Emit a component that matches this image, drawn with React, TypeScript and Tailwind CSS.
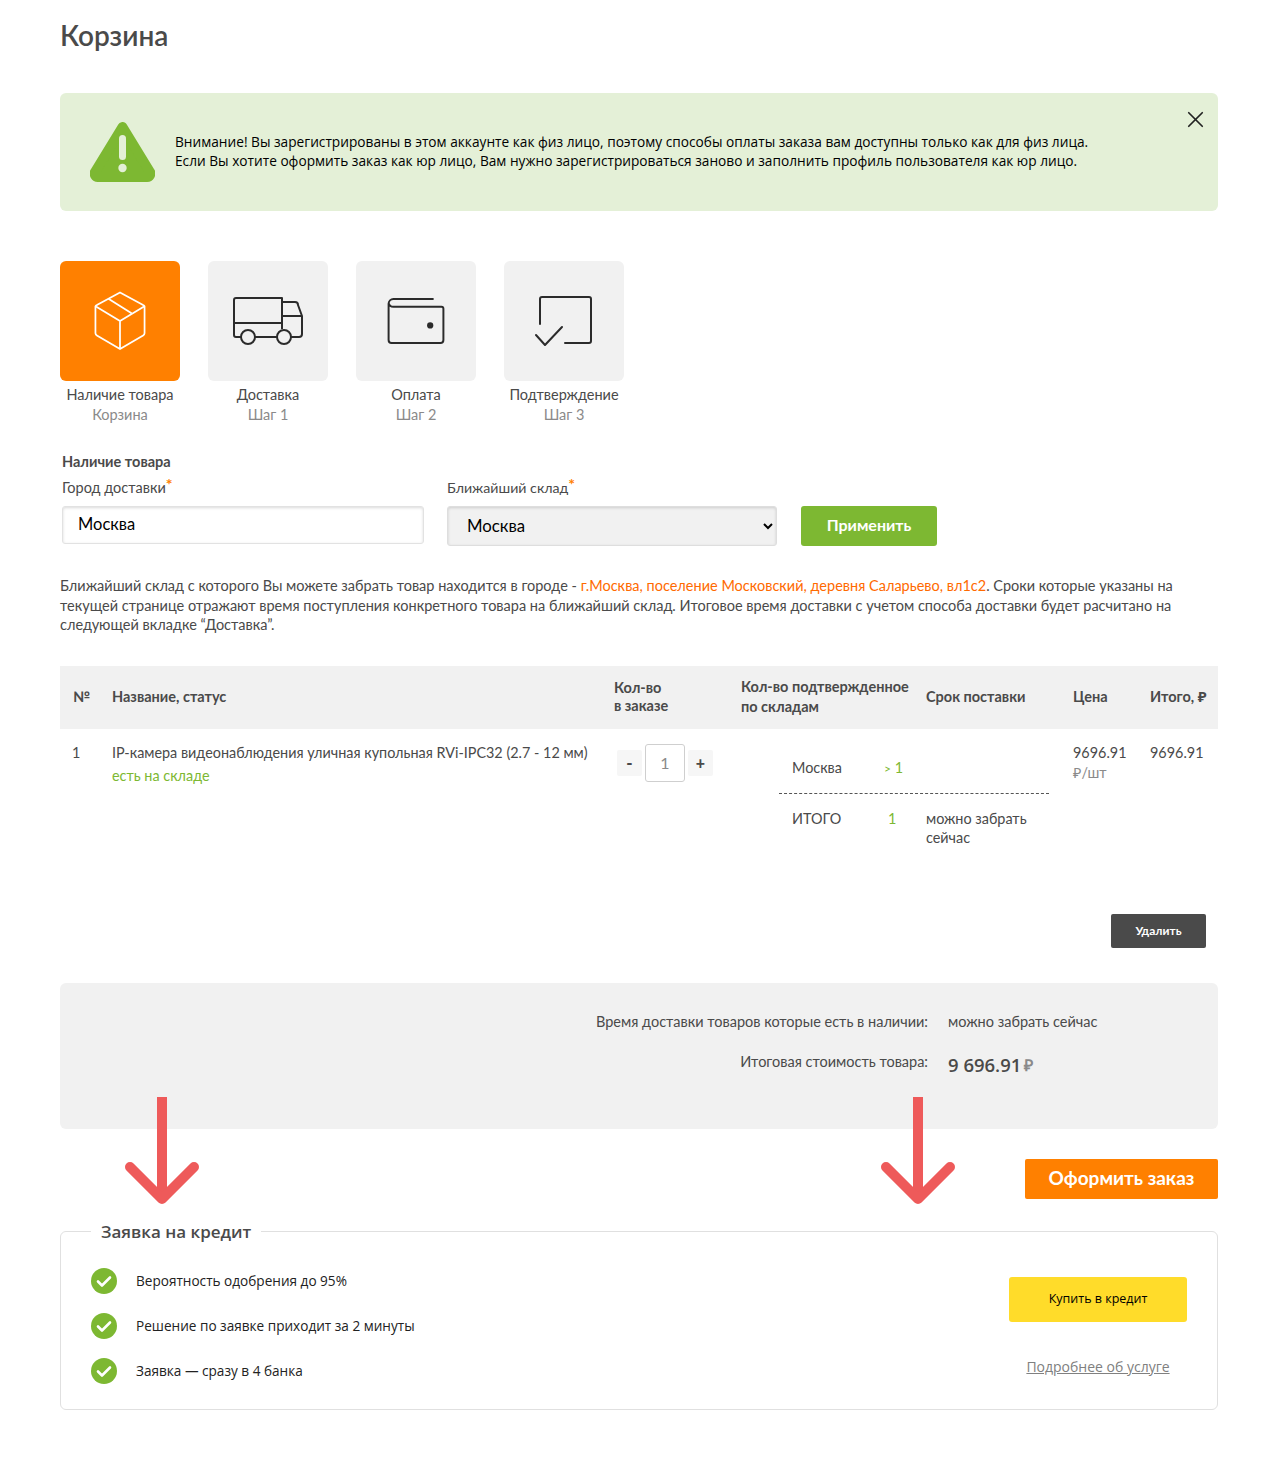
import { X } from 'lucide-react';

const lato = "font-['Lato','Noto_Sans',sans-serif]";

function Arrow({ className }: { className: string }) {
    return (
        <svg className={className} width="76" height="108" viewBox="0 0 76 108" fill="none">
            <path d="M38 0V100" stroke="#ee5a5a" strokeWidth="10" />
            <path d="M6 70L38 102L70 70" stroke="#ee5a5a" strokeWidth="10" strokeLinecap="round" strokeLinejoin="round" />
        </svg>
    );
}

function BoxIcon() {
    return (
        <svg width="52" height="60" viewBox="0 0 54 62" fill="none" stroke="#fff" strokeWidth="1.8" strokeLinejoin="round" preserveAspectRatio="none">
            <path d="M27 1.5L51 14.5A2 2 0 0 1 52.5 17V43.5A3 3 0 0 1 51 46L27 60L3 46A3 3 0 0 1 1.5 43.5V17A2 2 0 0 1 3 14.5Z" />
            <path d="M2 16L27 31L52 16M27 31V60M15 8L39 23" />
        </svg>
    );
}

function TruckIcon() {
    return (
        <svg width="70" height="48" viewBox="0 0 70 48" fill="none" stroke="#2b2b2b" strokeWidth="2" strokeLinejoin="round">
            <path d="M8 40H3A2 2 0 0 1 1 38V3A2 2 0 0 1 3 1H49V32M22 40H44" />
            <path d="M1 26H49" />
            <path d="M58 40H66A3 3 0 0 0 69 37V19L65 8A3 3 0 0 0 62 5H49M49 19H69" />
            <circle cx="15" cy="40" r="7" />
            <circle cx="51" cy="40" r="7" />
        </svg>
    );
}

function WalletIcon() {
    return (
        <svg width="58" height="46" viewBox="0 0 58 47" fill="none" stroke="#2b2b2b" strokeWidth="2" strokeLinejoin="round">
            <path d="M47 1H6A5 5 0 0 0 1 6V43A3 3 0 0 0 4 46H54A3 3 0 0 0 57 43V11A2 2 0 0 0 55 9H6A5 5 0 0 1 1 5" />
            <circle cx="43.5" cy="28" r="3.2" fill="#2b2b2b" stroke="none" />
        </svg>
    );
}

function ConfirmIcon() {
    return (
        <svg width="58" height="50" viewBox="0 0 58 50" fill="none" stroke="#2b2b2b" strokeWidth="2" strokeLinecap="round" strokeLinejoin="round">
            <path d="M5 28V3A2 2 0 0 1 7 1H54A2 2 0 0 1 56 3V45A2 2 0 0 1 54 47H30" />
            <path d="M1 39L10 49L27 31" />
        </svg>
    );
}

function CheckCircle() {
    return (
        <svg width="26" height="26" viewBox="0 0 26 26" className="shrink-0">
            <circle cx="13" cy="13" r="13" fill="#7db832" />
            <path d="M7 13.5L11 17.5L19 9.5" fill="none" stroke="#fff" strokeWidth="2.6" strokeLinecap="round" strokeLinejoin="round" />
        </svg>
    );
}

const steps = [
    { title: 'Наличие товара', sub: 'Корзина', icon: <BoxIcon />, active: true },
    { title: 'Доставка', sub: 'Шаг 1', icon: <TruckIcon />, active: false },
    { title: 'Оплата', sub: 'Шаг 2', icon: <WalletIcon />, active: false },
    { title: 'Подтверждение', sub: 'Шаг 3', icon: <ConfirmIcon />, active: false },
];

const credits = ['Вероятность одобрения до 95%', 'Решение по заявке приходит за 2 минуты', 'Заявка — сразу в 4 банка'];

export default function App() {
    return (
        <div className={`${lato} relative h-[1457px] bg-white pl-[60px] pr-[49px] text-[14px] text-[#4a4a4a]`}>
            <h1 className="pt-[18px] text-[28px] leading-[34px] font-semibold">Корзина</h1>

            {/* Alert */}
            <div className="relative mt-[41px] flex h-[118px] items-center rounded-md bg-[#e4f0d7] pl-[30px]">
                <svg width="65" height="60" viewBox="0 0 65 60">
                    <path d="M32.5 5L60 50A3.5 3.5 0 0 1 57 55H8A3.5 3.5 0 0 1 5 50Z" fill="#7db832" stroke="#7db832" strokeWidth="10" strokeLinejoin="round" />
                    <rect x="29" y="13" width="7" height="25" rx="3.5" fill="#e4f0d7" />
                    <circle cx="32.5" cy="46" r="4.2" fill="#e4f0d7" />
                </svg>
                <p className="ml-[20px] pb-[2px] font-['Open_Sans',sans-serif] text-[13.7px] leading-[19px] text-black">
                    Внимание! Вы зарегистрированы в этом аккаунте как физ лицо, поэтому способы оплаты заказа вам доступны только как для физ лица.
                    <br />
                    Если Вы хотите оформить заказ как юр лицо, Вам нужно зарегистрироваться заново и заполнить профиль пользователя как юр лицо.
                </p>
                <X className="absolute top-[13px] right-[9px] h-[27px] w-[27px] text-[#222]" strokeWidth={1.5} />
            </div>

            {/* Steps */}
            <div className="mt-[50px] flex gap-[28px]">
                {steps.map((s) => (
                    <div key={s.title} className="w-[120px] text-center">
                        <div className={`flex h-[120px] items-center justify-center rounded-md ${s.active ? 'bg-[#ff8000]' : 'bg-[#f1f1f1]'}`}>
                            {s.icon}
                        </div>
                        <div className="mt-[4px] whitespace-nowrap text-[14.5px] leading-[20px]">{s.title}</div>
                        <div className="text-[14.5px] leading-[20px] text-[#8a8a8a]">{s.sub}</div>
                    </div>
                ))}
            </div>

            {/* City form */}
            <div className="pt-[27px] pl-[2px]">
                <div className="text-[14.5px] leading-[20px] font-bold">Наличие товара</div>
                <div className="mt-[6px] flex items-start">
                    <div className="w-[362px]">
                        <div className="text-[14.5px] leading-[20px]">Город доставки<span className="relative -top-[3px] text-[16px] leading-[10px] font-bold text-[#ff8000]">*</span></div>
                        <input
                            readOnly
                            value="Москва"
                            className="mt-[8px] h-[38px] w-full rounded-[3px] border border-[#e2e2e2] bg-white pb-[3px] pl-[15px] text-[16.5px] text-black shadow-[inset_0_1px_3px_rgba(0,0,0,0.15)] outline-none"
                        />
                    </div>
                    <div className="ml-[23px] w-[330px]">
                        <div className="text-[14.2px] leading-[20px]">Ближайший склад<span className="relative -top-[3px] text-[16px] leading-[10px] font-bold text-[#ff8000]">*</span></div>
                        <select className="mt-[8px] h-[40px] w-full rounded-[3px] border border-[#dedede] bg-[#f1f1f1] pb-[1px] pl-[15px] text-[16.8px] text-black shadow-[inset_0_1px_3px_rgba(0,0,0,0.15)] outline-none">
                            <option>Москва</option>
                        </select>
                    </div>
                    <button className="mt-[28px] ml-[24px] h-[40px] w-[136px] rounded-[3px] bg-[#7db832] pb-[2px] text-[16px] font-bold text-white">Применить</button>
                </div>
            </div>

            <p className="mt-[30px] text-[14.5px] leading-[19.5px]">
                Ближайший склад с которого Вы можете забрать товар находится в городе - <span className="text-[#ff6a00]">г.Москва, поселение Московский, деревня Саларьево, вл1с2</span>. Сроки которые указаны на текущей странице отражают время поступления конкретного товара на ближайший склад. Итоговое время доставки с учетом способа доставки будет расчитано на следующей вкладке “Доставка”.
            </p>

            {/* Table */}
            <div className="mt-[31px]">
                <div className="grid h-[63px] grid-cols-[52px_502px_127px_185px_147px_77px_1fr] items-center bg-[#f1f1f1] text-[14.5px] leading-[18px] font-bold">
                    <div className="pl-[13px]">№</div>
                    <div>Название, статус</div>
                    <div>Кол-во<br />в заказе</div>
                    <div className="leading-[20px] whitespace-nowrap">Кол-во подтвержденное<br />по складам</div>
                    <div>Срок поставки</div>
                    <div>Цена</div>
                    <div className="whitespace-nowrap">Итого, ₽</div>
                </div>
                <div className="grid h-[175px] grid-cols-[52px_502px_127px_332px_77px_1fr] text-[14.4px] leading-[20px]">
                    <div className="pt-[14px] pl-[12px]">1</div>
                    <div className="pt-[14px]">
                        <div className="whitespace-nowrap">IP-камера видеонаблюдения уличная купольная RVi-IPC32 (2.7 - 12 мм)</div>
                        <div className="mt-[3px] text-[#7db832]">есть на складе</div>
                    </div>
                    <div className="flex items-start pt-[15px] pl-[3px]">
                        <button className="mt-[6px] h-[26px] w-[25px] rounded-[2px] bg-[#f6f6f6] text-[17px] font-black">-</button>
                        <div className="ml-[3px] flex h-[38px] w-[40px] items-center justify-center rounded-[3px] border border-[#cfcfcf] text-[16px] text-[#8a8a8a]">1</div>
                        <button className="mt-[6px] ml-[3px] h-[26px] w-[25px] rounded-[2px] bg-[#f6f6f6] text-[16px] font-black">+</button>
                    </div>
                    <div className="pt-[29px]">
                        <div className="ml-[38px] h-[36px] w-[270px] border-b border-dashed border-[#555]">
                            <div className="flex pl-[13px]">
                                <div className="w-[92px]">Москва</div>
                                <div className="text-[#7db832]"><span className="text-[12px]">&gt;</span> 1</div>
                            </div>
                        </div>
                        <div className="flex pt-[15px] pl-[51px]">
                            <div className="w-[96px]">ИТОГО</div>
                            <div className="w-[38px] text-[#7db832]">1</div>
                            <div className="leading-[19px]">можно забрать<br />сейчас</div>
                        </div>
                    </div>
                    <div className="pt-[14px]">
                        <div>9696.91</div>
                        <div className="text-[#8a8a8a]">₽/шт</div>
                    </div>
                    <div className="pt-[14px]">9696.91</div>
                </div>
                <div className="mt-[10px] flex justify-end pr-[12px]">
                    <button className="h-[34px] w-[95px] rounded-[2px] bg-[#4a4a4a] text-[12px] font-bold text-white">Удалить</button>
                </div>
            </div>

            {/* Summary */}
            <div className="mt-[35px] h-[146px] rounded-md bg-[#f1f1f1] pt-[29px] text-[14.5px]">
                <div className="flex">
                    <div className="w-[868px] text-right leading-[20px]">Время доставки товаров которые есть в наличии:</div>
                    <div className="ml-[20px] leading-[20px]">можно забрать сейчас</div>
                </div>
                <div className="mt-[20px] flex">
                    <div className="w-[868px] text-right leading-[20px]">Итоговая стоимость товара:</div>
                    <div className="ml-[20px] flex items-center gap-[3px] pt-[1px] font-['Open_Sans',sans-serif] text-[18.5px] leading-[24px] font-semibold">
                        9 696.91 <span className="text-[16px] text-[#8a8a8a]">₽</span>
                    </div>
                </div>
            </div>

            <div className="mt-[30px] flex justify-end">
                <button className="h-[40px] w-[193px] rounded-[2px] bg-[#ff8000] text-[19px] font-bold text-white">Оформить заказ</button>
            </div>

            {/* Credit */}
            <fieldset className="mt-[23px] h-[188px] rounded-md border border-[#e0e0e0] px-[30px] font-['Open_Sans',sans-serif]">
                <legend className="px-[10px] text-[17px] leading-[20px] font-semibold">Заявка на кредит</legend>
                <div className="flex justify-between">
                    <div className="flex w-[918px] flex-col gap-[19px] pt-[26px]">
                        {credits.map((c) => (
                            <div key={c} className="flex items-center gap-[19px] text-[13.6px] leading-[26px] text-[#222]">
                                <CheckCircle />
                                {c}
                            </div>
                        ))}
                    </div>
                    <div className="flex w-[178px] flex-col items-center pt-[35px]">
                        <button className="h-[45px] w-full rounded-[3px] bg-[#ffdc2a] text-[12.5px] text-black">Купить в кредит</button>
                        <a className="mt-[35px] text-[14px] leading-[20px] text-[#808080] underline">Подробнее об услуге</a>
                    </div>
                </div>
            </fieldset>

            <Arrow className="absolute top-[1097px] left-[124px]" />
            <Arrow className="absolute top-[1097px] left-[880px]" />
        </div>
    );
}
